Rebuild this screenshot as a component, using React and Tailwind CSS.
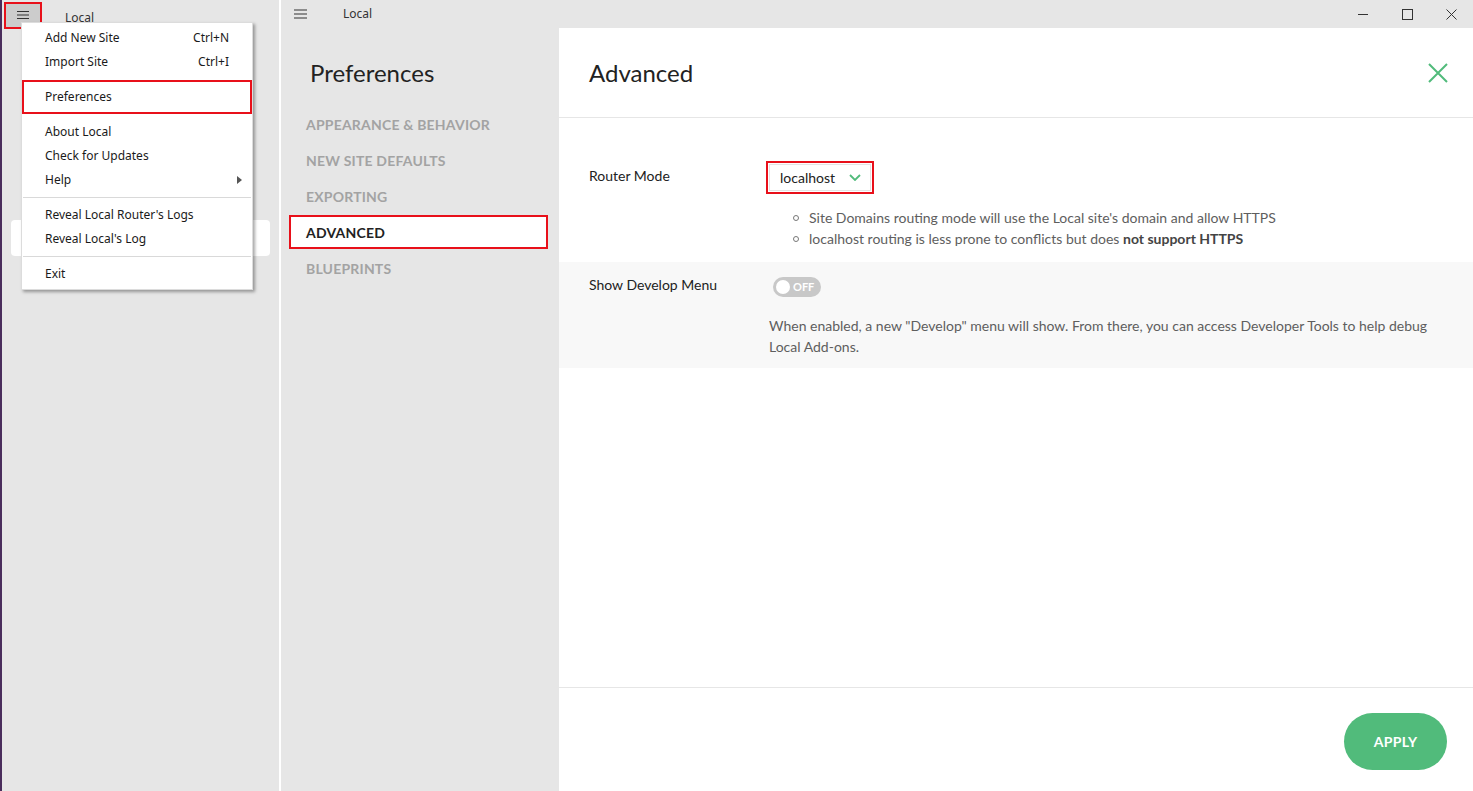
import React from 'react';

const lato = { fontFamily: 'Lato, "Open Sans", sans-serif' };

const MenuItem = ({ label, shortcut, arrow, boxed }) => (
  <div
    className={
      'flex items-center justify-between pr-[23px] text-[12px] text-[#1a1a1a] ' +
      (boxed ? 'h-[34px] border-2 border-[#e8101a] pl-[21px]' : 'h-[24px] pl-[23px]')
    }
  >
    <span>{label}</span>
    {shortcut && <span>{shortcut}</span>}
    {arrow && (
      <svg width="6" height="8" viewBox="0 0 6 8" className="-mr-[14px]">
        <path d="M0 0 L5 4 L0 8 Z" fill="#555" />
      </svg>
    )}
  </div>
);

const Separator = () => <div className="mx-[1px] my-[5px] h-px bg-[#d9d9d9]" />;

const navItems = ['Appearance & Behavior', 'New Site Defaults', 'Exporting', 'Advanced', 'Blueprints'];

const App = () => {
  return (
    <div className="flex h-[791px] w-[1473px] overflow-hidden bg-white" style={lato}>
      {/* Left window with open app menu */}
      <div className="relative w-[279px] shrink-0 border-l-2 border-[#4a2d5c] bg-[#e6e6e6]">
        <div className="flex h-[30px] items-center">
          <div className="ml-[2px] flex h-[27px] w-[38px] items-center justify-center border-2 border-[#e8101a] bg-[#cccccc]">
            <svg width="14" height="10" viewBox="0 0 14 10">
              <path d="M1 1.5h12M1 5h12M1 8.5h12" stroke="#333" strokeWidth="1" />
            </svg>
          </div>
          <span className="ml-[23px] mt-[6px] text-[12px] text-[#333]" style={{ fontFamily: '"Noto Sans", sans-serif' }}>
            Local
          </span>
        </div>
        <div className="mx-[9px] mt-[190px] h-[36px] rounded-[4px] bg-white" />

        {/* App menu */}
        <div
          className="absolute left-[19px] top-[22px] w-[232px] border border-[#dcdcdc] bg-white py-[3px] shadow-[2px_2px_3px_rgba(0,0,0,0.35)]"
          style={{ fontFamily: '"Noto Sans", sans-serif' }}
        >
          <MenuItem label="Add New Site" shortcut="Ctrl+N" />
          <MenuItem label="Import Site" shortcut="Ctrl+I" />
          <div className="h-[6px]" />
          <MenuItem label="Preferences" boxed />
          <div className="h-[6px]" />
          <MenuItem label="About Local" />
          <MenuItem label="Check for Updates" />
          <MenuItem label="Help" arrow />
          <Separator />
          <MenuItem label="Reveal Local Router's Logs" />
          <MenuItem label="Reveal Local's Log" />
          <Separator />
          <MenuItem label="Exit" />
        </div>
      </div>

      <div className="w-[2px] shrink-0 bg-white" />

      {/* Right window */}
      <div className="flex min-w-0 flex-1 flex-col">
        {/* Title bar */}
        <div className="flex h-[28px] shrink-0 items-center bg-[#e6e6e6]">
          <svg width="13" height="10" viewBox="0 0 13 10" className="ml-[13px]">
            <path d="M0 1h13M0 5h13M0 9h13" stroke="#333" strokeWidth="1" />
          </svg>
          <span className="ml-[36px] text-[12px] text-[#333]" style={{ fontFamily: '"Noto Sans", sans-serif' }}>
            Local
          </span>
          <div className="ml-auto flex h-full">
            <div className="flex w-[44px] items-center justify-center">
              <svg width="11" height="11" viewBox="0 0 11 11">
                <path d="M0 5.5h10" stroke="#333" strokeWidth="1" />
              </svg>
            </div>
            <div className="flex w-[44px] items-center justify-center">
              <svg width="11" height="11" viewBox="0 0 11 11">
                <rect x="0.5" y="0.5" width="10" height="10" fill="none" stroke="#333" strokeWidth="1" />
              </svg>
            </div>
            <div className="flex w-[44px] items-center justify-center">
              <svg width="11" height="11" viewBox="0 0 11 11">
                <path d="M0.5 0.5l10 10M10.5 0.5l-10 10" stroke="#333" strokeWidth="1" />
              </svg>
            </div>
          </div>
        </div>

        <div className="flex min-h-0 flex-1">
          {/* Preferences sidebar */}
          <div className="w-[278px] shrink-0 bg-[#e6e6e6]">
            <h1 className="pl-[29px] pt-[29px] text-[24px] leading-[32px] text-[#222]">Preferences</h1>
            <nav className="mt-[17px] flex flex-col">
              {navItems.map((item) =>
                item === 'Advanced' ? (
                  <div
                    key={item}
                    className="my-px ml-[8px] mr-[11px] flex h-[34px] items-center border-2 border-[#e8101a] bg-white pl-[15px] text-[14px] font-bold uppercase tracking-[0.2px] text-[#222]"
                  >
                    {item}
                  </div>
                ) : (
                  <div
                    key={item}
                    className="flex h-[36px] items-center pl-[25px] text-[14px] font-bold uppercase tracking-[0.2px] text-[#a3a3a3]"
                  >
                    {item}
                  </div>
                )
              )}
            </nav>
          </div>

          {/* Content */}
          <div className="flex min-w-0 flex-1 flex-col bg-white">
            <div className="flex h-[90px] shrink-0 items-center justify-between border-b border-[#e6e6e6] pl-[30px] pr-[25px]">
              <h2 className="text-[24px] text-[#222]">Advanced</h2>
              <svg width="20" height="20" viewBox="0 0 20 20">
                <path d="M1 1l18 18M19 1L1 19" stroke="#51bb7b" strokeWidth="2" />
              </svg>
            </div>

            <div className="flex-1">
              {/* Router Mode */}
              <div className="flex pb-[13px] pl-[30px] pr-[30px] pt-[43px]">
                <div className="w-[177px] shrink-0 pt-[5px] text-[14px] leading-[20px] text-[#222]">Router Mode</div>
                <div>
                  <div className="inline-flex border-2 border-[#e8101a] p-px">
                    <div className="flex h-[27px] items-center gap-[14px] border border-[#e4e4e4] pl-[10px] pr-[9px] text-[14px] text-[#222]">
                      <span>localhost</span>
                      <svg width="12" height="7" viewBox="0 0 12 7">
                        <path d="M1 1l5 5 5-5" stroke="#51bb7b" strokeWidth="1.8" fill="none" />
                      </svg>
                    </div>
                  </div>
                  <ul className="ml-[27px] mt-[13px] text-[14px] text-[#5e5e5e]">
                    <li className="flex h-[21px] items-center gap-[10px]">
                      <span className="h-[6px] w-[6px] rounded-full border border-[#777]" />
                      Site Domains routing mode will use the Local site's domain and allow HTTPS
                    </li>
                    <li className="flex h-[21px] items-center gap-[10px]">
                      <span className="h-[6px] w-[6px] rounded-full border border-[#777]" />
                      <span>
                        localhost routing is less prone to conflicts but does{' '}
                        <b className="font-bold text-[#444]">not support HTTPS</b>
                      </span>
                    </li>
                  </ul>
                </div>
              </div>

              {/* Show Develop Menu */}
              <div className="flex bg-[#f8f8f8] pb-[11px] pl-[30px] pr-[30px] pt-[13px]">
                <div className="w-[180px] shrink-0 text-[14px] leading-[20px] text-[#222]">Show Develop Menu</div>
                <div>
                  <div className="ml-[4px] mt-[2px] flex h-[20px] w-[48px] items-center gap-[3px] rounded-full bg-[#c8c8c8] pl-[3px]">
                    <span className="h-[14px] w-[14px] rounded-full bg-white" />
                    <span className="text-[11px] font-bold text-white">OFF</span>
                  </div>
                  <p className="mt-[18px] text-[14px] leading-[21px] text-[#5e5e5e]">
                    When enabled, a new "Develop" menu will show. From there, you can access Developer Tools to help debug
                    <br />
                    Local Add-ons.
                  </p>
                </div>
              </div>
            </div>

            <div className="flex h-[104px] shrink-0 justify-end border-t border-[#e6e6e6] pr-[26px] pt-[25px]">
              <button className="h-[57px] w-[103px] rounded-full bg-[#51bb7b] text-[14px] font-bold tracking-[0.3px] text-white">
                APPLY
              </button>
            </div>
          </div>
        </div>
      </div>
    </div>
  );
};

export default App;
